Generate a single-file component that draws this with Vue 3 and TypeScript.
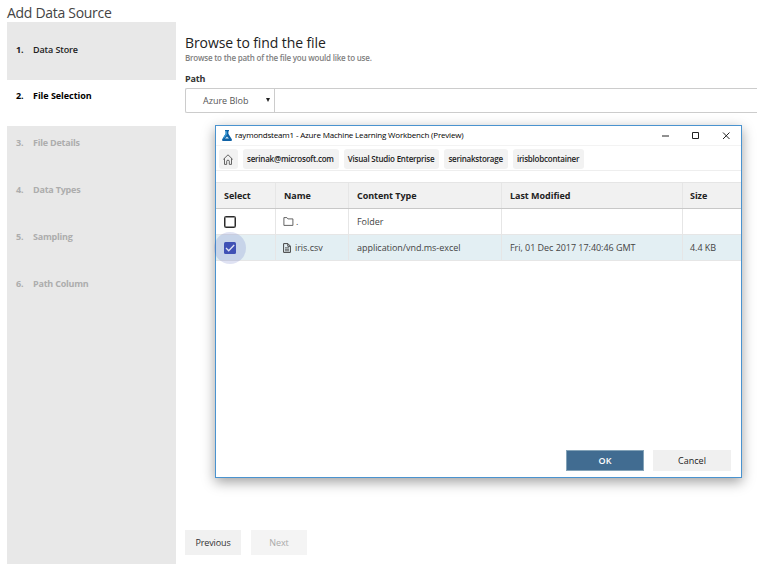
<script setup lang="ts">
interface Step { n: number; label: string; state: 'done' | 'active' | 'todo' }
interface FileRow { name: string; kind: 'folder' | 'file'; type: string; modified: string; size: string; selected: boolean }

const steps: Step[] = [
  { n: 1, label: 'Data Store', state: 'done' },
  { n: 2, label: 'File Selection', state: 'active' },
  { n: 3, label: 'File Details', state: 'todo' },
  { n: 4, label: 'Data Types', state: 'todo' },
  { n: 5, label: 'Sampling', state: 'todo' },
  { n: 6, label: 'Path Column', state: 'todo' },
]
const crumbs: string[] = ['serinak@microsoft.com', 'Visual Studio Enterprise', 'serinakstorage', 'irisblobcontainer']
const columns: string[] = ['Select', 'Name', 'Content Type', 'Last Modified', 'Size']
const rows: FileRow[] = [
  { name: '.', kind: 'folder', type: 'Folder', modified: '', size: '', selected: false },
  { name: 'iris.csv', kind: 'file', type: 'application/vnd.ms-excel', modified: 'Fri, 01 Dec 2017 17:40:46 GMT', size: '4.4 KB', selected: true },
]
</script>

<template>
  <div class="page">
    <h1 class="title">Add Data Source</h1>
    <div class="body">
      <nav class="steps">
        <div v-for="s in steps" :key="s.n" class="step" :class="s.state">
          <span class="num">{{ s.n }}.</span><span>{{ s.label }}</span>
        </div>
      </nav>
      <main class="main">
        <h2 class="heading">Browse to find the file</h2>
        <p class="sub">Browse to the path of the file you would like to use.</p>
        <label class="label">Path</label>
        <div class="path">
          <div class="source"><span>Azure Blob</span>
            <svg class="caret" width="4" height="4" viewBox="0 0 4 4"><path d="M0 0h4L2 4z" fill="#222" /></svg>
          </div>
          <div class="path-input"></div>
        </div>
        <div class="actions">
          <button class="nav-btn">Previous</button>
          <button class="nav-btn disabled">Next</button>
        </div>
      </main>
    </div>

    <section class="dialog">
      <header class="bar">
        <svg class="logo" width="10" height="11" viewBox="0 0 10 11">
          <path d="M3 0h4v1.2h-.6v2.6L9.8 9.2Q10.3 11 9 11H1Q-.3 11 .2 9.2L3.6 3.8V1.2H3z" fill="#0f62a6" />
          <path d="M3.6 1.2H5v3.3L2 8.3.9 8.2 3.6 3.8z" fill="#3a9bd6" />
          <path d="M3 8.6 5 6.4 7 8.6z" fill="#d5ebf7" />
        </svg>
        <span class="bar-title">raymondsteam1 - Azure Machine Learning Workbench (Preview)</span>
        <svg class="win" width="70" height="9" viewBox="0 0 70 9" fill="none" stroke="#222">
          <path d="M0 5h7" /><path d="M30.5 1.5h6v6h-6z" /><path d="M61 1.5l6.5 6.5M67.5 1.5L61 8" />
        </svg>
      </header>
      <div class="crumbs">
        <span class="crumb home">
          <svg width="10" height="11" viewBox="0 0 10 11" fill="none" stroke="#555" stroke-width=".9">
            <path d="M.3 5.4 5 .8l4.7 4.6M1.5 4.4v6h2.2V7.2q0-1 1.3-1t1.3 1v3.2h2.2v-6" />
          </svg>
        </span>
        <span v-for="c in crumbs" :key="c" class="crumb">{{ c }}</span>
      </div>
      <div class="grid">
        <div class="row head">
          <div v-for="c in columns" :key="c" class="cell">{{ c }}</div>
        </div>
        <div v-for="r in rows" :key="r.name" class="row" :class="{ selected: r.selected }">
          <div class="cell">
            <span class="check" :class="{ on: r.selected }">
              <svg v-if="r.selected" width="12" height="12" viewBox="0 0 12 12" fill="none" stroke="#fff" stroke-width="1.3"><path d="M2 6l2.7 2.8L10.2 3" /></svg>
            </span>
          </div>
          <div class="cell name">
            <svg v-if="r.kind === 'folder'" width="11" height="9" viewBox="0 0 11 9" fill="none" stroke="#555" stroke-width=".9">
              <path d="M.9 8.4V.6h3l1 1.3h5v6.5z" />
            </svg>
            <svg v-else class="doc" width="8" height="10" viewBox="0 0 8 10" fill="none" stroke="#444" stroke-width="1">
              <path d="M.6.6h4.3l2.5 2.5v6.3H.6zM4.8.8v2.5h2.4" /><path d="M2 4.8h4M2 6.3h4M2 7.8h4" stroke-width=".8" />
            </svg>
            <span>{{ r.name }}</span>
          </div>
          <div class="cell">{{ r.type }}</div>
          <div class="cell">{{ r.modified }}</div>
          <div class="cell">{{ r.size }}</div>
        </div>
      </div>
      <footer class="foot">
        <button class="btn primary">OK</button>
        <button class="btn">Cancel</button>
      </footer>
    </section>
  </div>
</template>

<style>
body { background: #fff; overflow: hidden; }
</style>

<style scoped>
* { box-sizing: border-box; }
.page { position: relative; width: 757px; height: 580px; overflow: hidden; font: 9px/12px "Open Sans", sans-serif; color: #333; background: #fff; }
.title { margin: 0; padding: 4px 0 0 7px; height: 22px; font-size: 14px; line-height: 18px; font-weight: 400; letter-spacing: -.3px; color: #444; }
.body { display: flex; padding-left: 7px; height: 542px; }
.steps { width: 169px; flex: none; background: #e8e8e8; }
.step { display: flex; height: 47px; padding: 11px 0 0 9px; font-weight: 600; letter-spacing: -.11px; color: #222; }
.step .num { width: 17px; font-weight: 700; }
.step.done { height: 58px; padding-top: 22px; }
.step.active { height: 46px; padding-top: 10px; background: #fff; color: #000; font-weight: 700; letter-spacing: -.04px; }
.step.todo { color: #adadad; font-weight: 700; letter-spacing: -.22px; }
.main { flex: 1; padding: 12px 0 0 9px; }
.heading { margin: 0; font-size: 14px; line-height: 18px; font-weight: 400; letter-spacing: -.1px; color: #222; }
.sub { margin: 0; font-size: 8px; line-height: 12px; font-weight: 600; letter-spacing: -.22px; color: #808080; }
.label { display: block; margin-top: 9px; font-weight: 700; letter-spacing: -.15px; color: #333; }
.path { display: flex; height: 25px; margin-top: 3px; border: 1px solid #ccc; border-right: 0; border-radius: 2px 0 0 2px; }
.source { display: flex; align-items: center; justify-content: space-between; width: 89px; padding: 0 4px 0 17px; border-right: 1px solid #ccc; color: #555; }
.caret { margin-top: -1px; }
.path-input { flex: 1; }
.actions { display: flex; gap: 10px; margin-top: 417px; }
button { font: inherit; border: 0; padding: 0; margin: 0; }
.nav-btn { width: 56px; height: 25px; background: #f1f1f1; color: #333; letter-spacing: -.12px; }
.nav-btn.disabled { background: #f4f4f4; color: #aaa; }

.dialog { position: absolute; left: 215px; top: 125px; width: 527px; height: 353px; display: flex; flex-direction: column; background: #fff; border: 1px solid #4a93cf; box-shadow: 0 4px 12px rgba(0, 0, 0, .38); }
.bar { display: flex; align-items: center; height: 20px; padding: 0 9px 0 6px; border-bottom: 1px solid #f3f3f3; }
.logo { margin-right: 3px; }
.bar-title { flex: 1; margin-top: -1px; font-size: 8px; letter-spacing: -.18px; color: #000; white-space: nowrap; }
.crumbs { display: flex; gap: 5px; height: 25px; padding: 3px 0 0 3px; border-bottom: 1px solid #eee; }
.crumb { height: 20px; padding: 0 5px 0 4px; border-radius: 3px; background: #f2f2f2; font-size: 8px; line-height: 20px; font-weight: 600; letter-spacing: -.22px; color: #222; }
.crumb.home { display: flex; align-items: center; width: 19px; padding: 1px 0 0 4px; }
.grid { margin-top: 11px; }
.row { display: grid; grid-template-columns: 60px 73px 153px 181px 1fr; height: 26px; border-bottom: 1px solid #e6e6e6; color: #444; }
.row.head { height: 27px; background: #f1f1f1; border-top: 1px solid #e5e5e5; border-bottom-color: #c8c8c8; font-weight: 700; letter-spacing: -.08px; color: #222; }
.row.selected { background: #e3eff3; }
.cell { display: flex; align-items: center; padding-left: 8px; border-right: 1px solid #e6e6e6; letter-spacing: -.04px; white-space: nowrap; }
.cell:last-child { padding-left: 7px; border-right: 0; }
.name { gap: 2px; padding-left: 7px; }
.name .doc { margin-right: 2px; }
.check { position: relative; display: block; width: 12px; height: 12px; border: 2px solid #2b2b2b; border-radius: 1.5px; }
.check:not(.on) { border-width: 1px; box-shadow: inset 0 0 0 .5px #2b2b2b; }
.check.on { border: 0; background: #3f51b5; }
.check.on svg { display: block; }
.check.on::before { content: ""; position: absolute; inset: -10px; border-radius: 50%; background: rgba(63, 81, 181, .17); }
.foot { display: flex; justify-content: flex-end; gap: 9px; margin-top: auto; padding: 0 10px 6px 0; }
.btn { width: 78px; height: 21px; background: #f0f0f0; color: #222; font-size: 9px; }
.btn.primary { background: #416c91; color: #fff; font-weight: 600; border: 1px solid #84a3b8; }
</style>
